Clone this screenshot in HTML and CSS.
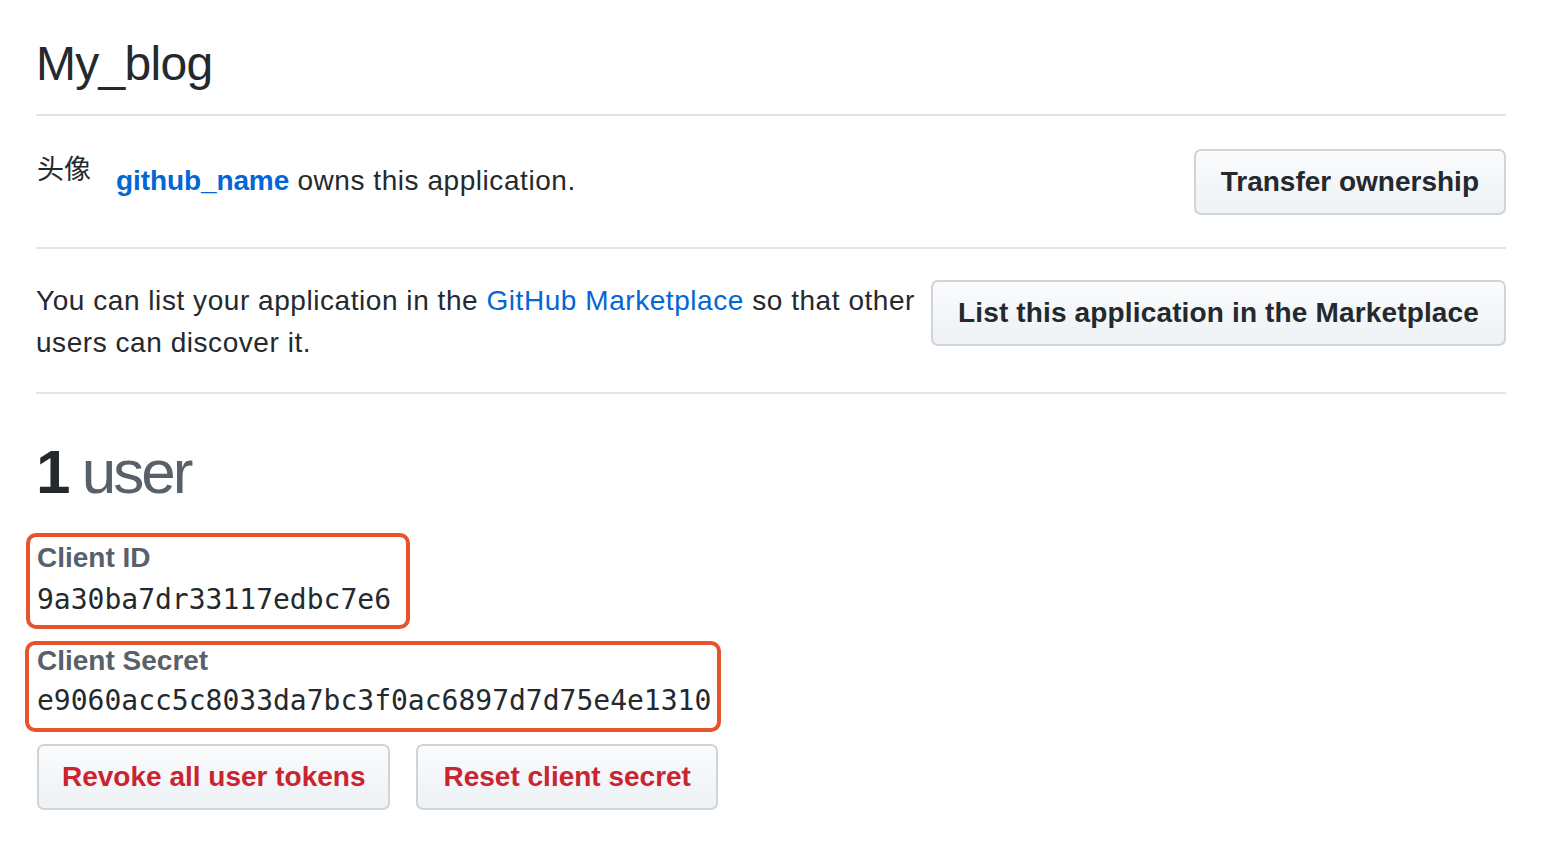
FILE: index.html
```html
<!DOCTYPE html>
<html lang="en">
<head>
<meta charset="utf-8">
<title>My_blog</title>
<link rel="stylesheet" href="styles.css">
</head>
<body>
<div class="page">
  <h2 class="subhead">My_blog</h2>

  <div class="row row-owner">
    <div class="owner">
      <span class="avatar">头像</span>
      <span class="owner-text"><a class="link strong" href="#">github_name</a> owns this application.</span>
    </div>
    <button class="btn">Transfer ownership</button>
  </div>

  <div class="row row-market">
    <p class="market-text">You can list your application in the <a class="link" href="#">GitHub Marketplace</a> so that other users can discover it.</p>
    <button class="btn btn-market">List this application in the Marketplace</button>
  </div>

  <h3 class="users"><span class="users-count">1</span> user</h3>

  <dl class="field field-id">
    <dt class="field-label">Client ID</dt>
    <dd class="field-value">9a30ba7dr33117edbc7e6</dd>
  </dl>

  <dl class="field field-secret">
    <dt class="field-label">Client Secret</dt>
    <dd class="field-value">e9060acc5c8033da7bc3f0ac6897d7d75e4e1310</dd>
  </dl>

  <div class="actions">
    <button class="btn btn-danger btn-revoke">Revoke all user tokens</button>
    <button class="btn btn-danger">Reset client secret</button>
  </div>
</div>
</body>
</html>
```

FILE: styles.css
```css
* { box-sizing: border-box; }

html, body {
  margin: 0;
  padding: 0;
  background: #ffffff;
}

body {
  font-family: "Liberation Sans", Arial, "Noto Sans CJK SC", sans-serif;
  font-size: 28px;
  line-height: 42px;
  color: #24292e;
}

.page {
  width: 1470px;
  margin-left: 36px;
}

.subhead {
  margin: 0;
  padding: 34px 0 20px;
  font-size: 48px;
  line-height: 60px;
  font-weight: 400;
  letter-spacing: -0.7px;
  border-bottom: 2px solid #e1e4e8;
}

.row {
  display: flex;
  border-bottom: 2px solid #e1e4e8;
}

.row-owner {
  align-items: center;
  justify-content: space-between;
  padding: 33px 0 32px;
}

.owner {
  display: flex;
  align-items: center;
}

.avatar {
  display: block;
  width: 64px;
  height: 64px;
  margin-right: 16px;
  padding-left: 1px;
  font-family: "Noto Sans CJK SC", sans-serif;
  font-size: 27px;
  line-height: 36px;
  color: #24292e;
}

.owner-text {
  padding-bottom: 2px;
  letter-spacing: 0.55px;
}

.link {
  color: #0366d6;
  text-decoration: none;
}

.strong {
  font-weight: 700;
  letter-spacing: -0.1px;
}

.row-market {
  align-items: flex-start;
  padding: 31px 0 28px;
}

.market-text {
  flex: 1;
  margin: 0 16px 0 0;
  letter-spacing: 0.55px;
}

.btn {
  flex-shrink: 0;
  height: 66px;
  padding: 0 25px;
  font-family: "Liberation Sans", Arial, sans-serif;
  font-size: 28px;
  font-weight: 700;
  line-height: 62px;
  color: #24292e;
  background: linear-gradient(#fafbfc, #eff3f6 90%);
  border: 2px solid #d0d4d8;
  border-radius: 7px;
  white-space: nowrap;
}

.btn-market {
  letter-spacing: 0.15px;
}

.btn-revoke {
  padding: 0 23px;
}

.users {
  margin: 39px 0 0;
  font-size: 62px;
  line-height: 77px;
  font-weight: 400;
  color: #586069;
  letter-spacing: -3px;
}

.users-count {
  font-weight: 700;
  color: #24292e;
}

.field {
  margin: 23px 0 0 -10px;
  border: 4px solid #e6532d;
  border-radius: 10px;
  width: fit-content;
}

.field-id {
  padding: 0 15px 4px 7px;
}

.field-secret {
  margin-top: 12px;
  margin-left: -11px;
  padding: 0 6px 3px 8px;
}

.field-label {
  font-weight: 700;
  color: #586069;
}

.field-secret .field-label {
  line-height: 32px;
}

.field-value {
  margin: 0;
  font-family: "DejaVu Sans Mono", "Liberation Mono", monospace;
  font-size: 28px;
  color: #24292e;
}

.field-secret .field-value {
  line-height: 48px;
}

.actions {
  display: flex;
  gap: 26px;
  margin-top: 12px;
  padding-left: 1px;
}

.btn-danger {
  color: #cb2431;
}
```
